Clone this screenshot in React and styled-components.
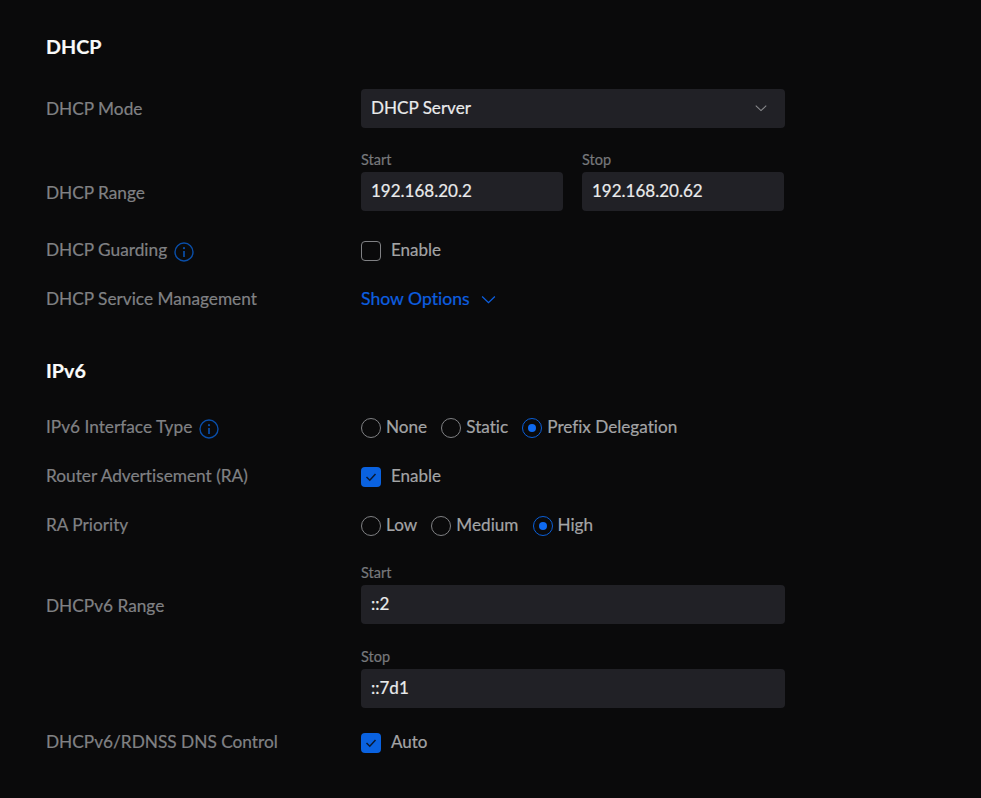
import React from 'react'
import styled, { createGlobalStyle } from 'styled-components'

const Global = createGlobalStyle`
  html, body { margin: 0; padding: 0; background: #0a0a0b; }
  body {
    font-family: Lato, "Open Sans", sans-serif;
    font-size: 17px;
    font-variant-ligatures: none;
    -webkit-text-stroke: 0.2px;
  }
  * { box-sizing: border-box; }
`

const Page = styled.div`
  width: 981px;
  height: 798px;
  padding: 34px 0 0 46px;
  background: #0a0a0b;
  overflow: hidden;
`
const Section = styled.section`
  display: flex;
  flex-direction: column;
  margin-bottom: ${p => p.$mb || 0}px;
`
const Heading = styled.h2`
  margin: 0;
  height: 26px;
  line-height: 26px;
  font-size: 19.7px;
  font-weight: 700;
  color: #f9fafa;
`
const Row = styled.div`
  display: grid;
  grid-template-columns: 315px 424px;
  align-items: ${p => p.$align || 'center'};
  height: ${p => p.$h}px;
  margin-top: ${p => p.$mt || 0}px;
`
const Label = styled.div`
  display: flex;
  align-items: center;
  gap: 7px;
  color: #808184;
  font-size: 17.25px;
  line-height: 24px;
  padding-top: ${p => p.$pt || 0}px;
`
const Select = styled.div`
  display: flex;
  align-items: center;
  justify-content: space-between;
  height: 39px;
  padding: 0 17px 2px 10px;
  background: #212126;
  border-radius: 4px;
  color: #eaebec;
  font-size: 17.1px;
`
const Fields = styled.div`
  display: flex;
  flex-direction: ${p => p.$stack ? 'column' : 'row'};
  gap: ${p => p.$stack ? 24 : 19}px;
`
const Field = styled.div`
  display: flex;
  flex-direction: column;
  gap: 3px;
  width: ${p => p.$w ? p.$w + 'px' : '100%'};
`
const Caption = styled.span`
  color: #77787b;
  font-size: 14.5px;
  line-height: 18px;
  height: 18px;
`
const Input = styled.div`
  height: 39px;
  line-height: 37px;
  padding: 0 10px;
  background: #212126;
  border-radius: 4px;
  color: #eaebec;
  font-size: 17px;
`
const CheckRow = styled.div`
  display: flex;
  align-items: center;
  gap: 10px;
  color: #a3a4a6;
  line-height: 22px;
`
const Box = styled.span`
  display: flex;
  align-items: center;
  justify-content: center;
  width: 20px;
  height: 20px;
  margin-top: 2px;
  border-radius: 4px;
  border: ${p => p.$on ? 'none' : '1.5px solid #808184'};
  background: ${p => p.$on ? '#0a62e0' : 'transparent'};
`
const Radios = styled.div`
  display: flex;
  align-items: center;
  gap: 14.1px;
`
const RadioItem = styled.span`
  display: flex;
  align-items: center;
  gap: 5px;
  color: #a3a4a6;
  font-size: 17.15px;
  line-height: 22px;
`
const Circle = styled.span`
  display: flex;
  align-items: center;
  justify-content: center;
  width: 20px;
  height: 20px;
  margin-top: 2px;
  border-radius: 50%;
  border: 1.5px solid ${p => p.$on ? '#0a5fd8' : '#808184'};
  &::after {
    content: '';
    display: ${p => p.$on ? 'block' : 'none'};
    width: 8px;
    height: 8px;
    border-radius: 50%;
    background: #0f6af0;
  }
`
const Link = styled.span`
  display: flex;
  align-items: center;
  gap: 10px;
  color: #0d5fe0;
  font-size: 17.6px;
  line-height: 22px;
`

const Chevron = ({ color, size }) => (
  <svg width={size} height={size} viewBox="0 0 16 16" fill="none" stroke={color} strokeWidth="1.2">
    <path d="M2 5.2 8 11l6-5.8" />
  </svg>
)
const Info = () => (
  <svg width="20" height="20" viewBox="0 0 20 20" fill="none" style={{ marginTop: 3 }}>
    <circle cx="10" cy="10" r="9" stroke="#0a4ea8" strokeWidth="1.4" />
    <circle cx="10" cy="6.2" r="1.1" fill="#0a4ea8" />
    <path d="M10 9v6" stroke="#0a4ea8" strokeWidth="1.7" />
  </svg>
)
const Check = ({ on }) => (
  <Box $on={on}>
    {on && (
      <svg width="14" height="14" viewBox="0 0 14 14" fill="none" stroke="#0b1a33" strokeWidth="1.5">
        <path d="M2.5 7 5.8 10.2 11.5 4" />
      </svg>
    )}
  </Box>
)
const Radio = ({ on, children }) => (
  <RadioItem><Circle $on={on} /><span>{children}</span></RadioItem>
)

export default function App() {
  return (
    <Page>
      <Global />
      <Section $mb={47}>
        <Heading>DHCP</Heading>
        <Row $h={39} $mt={29}>
          <Label>DHCP Mode</Label>
          <Select>DHCP Server <Chevron color="#8a8b8e" size={14} /></Select>
        </Row>
        <Row $h={60} $mt={23} $align="start">
          <Label $pt={30}>DHCP Range</Label>
          <Fields>
            <Field $w={202}>
              <Caption>Start</Caption>
              <Input>192.168.20.2</Input>
            </Field>
            <Field $w={202}>
              <Caption>Stop</Caption>
              <Input>192.168.20.62</Input>
            </Field>
          </Fields>
        </Row>
        <Row $h={24} $mt={27}>
          <Label>DHCP Guarding <Info /></Label>
          <CheckRow><Check />Enable</CheckRow>
        </Row>
        <Row $h={24} $mt={25}>
          <Label>DHCP Service Management</Label>
          <Link>Show Options <Chevron color="#0d5fe0" size={17} /></Link>
        </Row>
      </Section>
      <Section>
        <Heading>IPv6</Heading>
        <Row $h={24} $mt={31}>
          <Label>IPv6 Interface Type <Info /></Label>
          <Radios>
            <Radio>None</Radio>
            <Radio>Static</Radio>
            <Radio on>Prefix Delegation</Radio>
          </Radios>
        </Row>
        <Row $h={24} $mt={25}>
          <Label>Router Advertisement (RA)</Label>
          <CheckRow><Check on />Enable</CheckRow>
        </Row>
        <Row $h={24} $mt={25}>
          <Label>RA Priority</Label>
          <Radios>
            <Radio>Low</Radio>
            <Radio>Medium</Radio>
            <Radio on>High</Radio>
          </Radios>
        </Row>
        <Row $h={156} $mt={27} $align="start">
          <Label $pt={30}>DHCPv6 Range</Label>
          <Fields $stack>
            <Field>
              <Caption>Start</Caption>
              <Input>::2</Input>
            </Field>
            <Field>
              <Caption>Stop</Caption>
              <Input>::7d1</Input>
            </Field>
          </Fields>
        </Row>
        <Row $h={24} $mt={10}>
          <Label>DHCPv6/RDNSS DNS Control</Label>
          <CheckRow><Check on />Auto</CheckRow>
        </Row>
      </Section>
    </Page>
  )
}
